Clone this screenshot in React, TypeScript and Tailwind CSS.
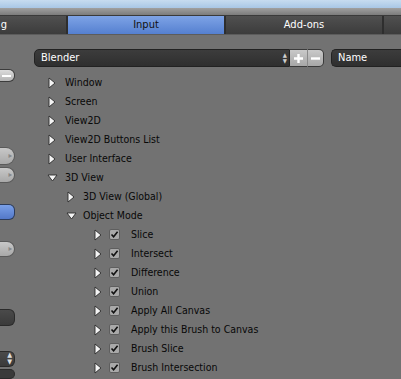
import React from 'react';

type Row = { label: string; level: number; open?: boolean; check?: boolean };

const rows: Row[] = [
  { label: 'Window', level: 0 },
  { label: 'Screen', level: 0 },
  { label: 'View2D', level: 0 },
  { label: 'View2D Buttons List', level: 0 },
  { label: 'User Interface', level: 0 },
  { label: '3D View', level: 0, open: true },
  { label: '3D View (Global)', level: 1 },
  { label: 'Object Mode', level: 1, open: true },
  { label: 'Slice', level: 2, check: true },
  { label: 'Intersect', level: 2, check: true },
  { label: 'Difference', level: 2, check: true },
  { label: 'Union', level: 2, check: true },
  { label: 'Apply All Canvas', level: 2, check: true },
  { label: 'Apply this Brush to Canvas', level: 2, check: true },
  { label: 'Brush Slice', level: 2, check: true },
  { label: 'Brush Intersection', level: 2, check: true },
];

const Arrow: React.FC<{ open?: boolean }> = ({ open }) =>
  open ? (
    <svg width="11" height="8" viewBox="0 0 11 8" className="shrink-0">
      <path d="M1 1 L10 1 L5.5 7 Z" fill="#f4f4f4" stroke="#2a2a2a" strokeWidth="0.9" strokeLinejoin="round" />
    </svg>
  ) : (
    <svg width="8" height="12" viewBox="0 0 8 12" className="shrink-0">
      <path d="M1 1 L7 6 L1 11 Z" fill="#f4f4f4" stroke="#2a2a2a" strokeWidth="0.9" strokeLinejoin="round" />
    </svg>
  );

const Check = () => (
  <div className="w-[11px] h-[11px] rounded-[2px] bg-[#a9a9a9] border border-[#5e5e5e] flex items-center justify-center shrink-0">
    <svg width="9" height="9" viewBox="0 0 9 9">
      <path d="M1.5 4.5 L3.6 6.8 L7.6 1.8" fill="none" stroke="#111" strokeWidth="1.6" />
    </svg>
  </div>
);

const SideBtn: React.FC<{ className: string; children?: React.ReactNode }> = ({ className, children }) => (
  <div className={`w-[15px] rounded-r-[6px] border border-l-0 flex items-center justify-end pr-[2px] ${className}`}>{children}</div>
);

export default function App() {
  return (
    <div
      className="w-[401px] h-[379px] overflow-hidden bg-[#727272] flex flex-col"
      style={{ fontFamily: '"DejaVu Sans Condensed", "DejaVu Sans", Verdana, sans-serif' }}
    >
      {/* window chrome */}
      <div className="h-[8px] bg-gradient-to-b from-[#c7dcf0] to-[#a9c7e6] shrink-0" />
      <div className="h-[8px] bg-gradient-to-b from-[#a0a0a0] to-[#7c7c7c] border-b border-[#3a3a3a] shrink-0" />

      {/* tabs */}
      <div className="h-[18px] flex gap-[2px] bg-[#2e2e2e] shrink-0 text-[11px] leading-[18px]">
        <div className="w-[66px] shrink-0 bg-gradient-to-b from-[#505050] to-[#3c3c3c] text-white text-right pr-[59px] overflow-hidden">g</div>
        <div className="w-[156px] shrink-0 bg-gradient-to-b from-[#7ea3e6] to-[#5580d0] text-[#111] text-center">Input</div>
        <div className="w-[156px] shrink-0 bg-gradient-to-b from-[#505050] to-[#3c3c3c] text-white text-center">Add-ons</div>
        <div className="flex-1 bg-gradient-to-b from-[#505050] to-[#3c3c3c]" />
      </div>
      <div className="h-[1px] bg-[#5c5c5c] shrink-0" />

      <div className="flex flex-1 min-h-0">
        {/* left cut-off column */}
        <div className="w-[15px] shrink-0 flex flex-col">
          <SideBtn className="mt-[34px] h-[14px] bg-gradient-to-b from-[#dcdcdc] to-[#b4b4b4] border-[#3c3c3c]">
            <div className="w-[9px] h-[2px] bg-white mr-[1px]" />
          </SideBtn>
          <SideBtn className="mt-[65px] h-[18px] rounded-r-[9px] bg-gradient-to-b from-[#c8c8c8] to-[#a8a8a8] border-[#5a5a5a]">
            <span className="text-[8px] text-[#888]">▸</span>
          </SideBtn>
          <SideBtn className="mt-[2px] h-[17px] rounded-r-[9px] bg-gradient-to-b from-[#c8c8c8] to-[#a8a8a8] border-[#5a5a5a]">
            <span className="text-[8px] text-[#888]">▸</span>
          </SideBtn>
          <SideBtn className="mt-[21px] h-[17px] bg-gradient-to-b from-[#7aa0e8] to-[#5378c8] border-[#2c3c5c]" />
          <SideBtn className="mt-[21px] h-[17px] rounded-r-[9px] bg-gradient-to-b from-[#c8c8c8] to-[#a8a8a8] border-[#5a5a5a]">
            <span className="text-[8px] text-[#888]">▸</span>
          </SideBtn>
          <SideBtn className="mt-[52px] h-[18px] bg-gradient-to-b from-[#4a4a4a] to-[#3a3a3a] border-[#2a2a2a]" />
          <SideBtn className="mt-[25px] h-[17px] bg-gradient-to-b from-[#4a4a4a] to-[#3a3a3a] border-[#2a2a2a]">
            <span className="text-[7px] leading-[7px] text-[#ddd] flex flex-col items-center">
              <span>▲</span>
              <span>▼</span>
            </span>
          </SideBtn>
          <SideBtn className="mt-[2px] h-[10px] bg-[#3a3a3a] border-[#2a2a2a]" />
        </div>

        {/* main */}
        <div className="flex-1 min-w-0 flex flex-col pl-[19px]">
          <div className="mt-[14px] h-[18px] flex items-center text-[11px]">
            <div className="w-[256px] h-full shrink-0 rounded-l-[5px] bg-gradient-to-b from-[#3c3c3c] to-[#2f2f2f] border border-[#222] flex items-center pl-[6px] pr-[2px] text-white">
              <span className="flex-1">Blender</span>
              <span className="text-[6px] leading-[6px] flex flex-col text-[#cfcfcf]">
                <span>▲</span>
                <span>▼</span>
              </span>
            </div>
            <div className="w-[17px] h-full shrink-0 bg-gradient-to-b from-[#c9c9c9] to-[#a7a7a7] border-y border-[#3a3a3a] flex items-center justify-center">
              <svg width="11" height="11" viewBox="0 0 11 11">
                <path d="M5.5 1 V10 M1 5.5 H10" stroke="#fff" strokeWidth="2.4" />
              </svg>
            </div>
            <div className="w-[17px] h-full shrink-0 rounded-r-[5px] bg-gradient-to-b from-[#c9c9c9] to-[#a7a7a7] border border-l-[#8a8a8a] border-[#3a3a3a] flex items-center justify-center">
              <svg width="11" height="11" viewBox="0 0 11 11">
                <path d="M1 5.5 H10" stroke="#fff" strokeWidth="2.4" />
              </svg>
            </div>
            <div className="ml-[7px] flex-1 h-full rounded-l-[5px] bg-gradient-to-b from-[#3c3c3c] to-[#2f2f2f] border border-r-0 border-[#222] flex items-center pl-[6px] text-white">
              Name
            </div>
          </div>

          <div className="mt-[6px] flex flex-col text-[10.5px] text-[#080808]">
            {rows.map((r) => (
              <div key={r.label} className="h-[19px] flex items-center whitespace-nowrap">
                {r.level === 0 && (
                  <div className="flex items-center pl-[13px] gap-[8px]">
                    <div className="w-[10px] flex justify-center"><Arrow open={r.open} /></div>
                    <span>{r.label}</span>
                  </div>
                )}
                {r.level === 1 && (
                  <div className="flex items-center pl-[32px] gap-[7px]">
                    <div className="w-[10px] flex justify-center"><Arrow open={r.open} /></div>
                    <span>{r.label}</span>
                  </div>
                )}
                {r.level === 2 && (
                  <div className="flex items-center pl-[59px]">
                    <div className="w-[10px] flex justify-center"><Arrow /></div>
                    <div className="ml-[6px]"><Check /></div>
                    <span className="ml-[11px]">{r.label}</span>
                  </div>
                )}
              </div>
            ))}
          </div>
        </div>
      </div>
    </div>
  );
}
